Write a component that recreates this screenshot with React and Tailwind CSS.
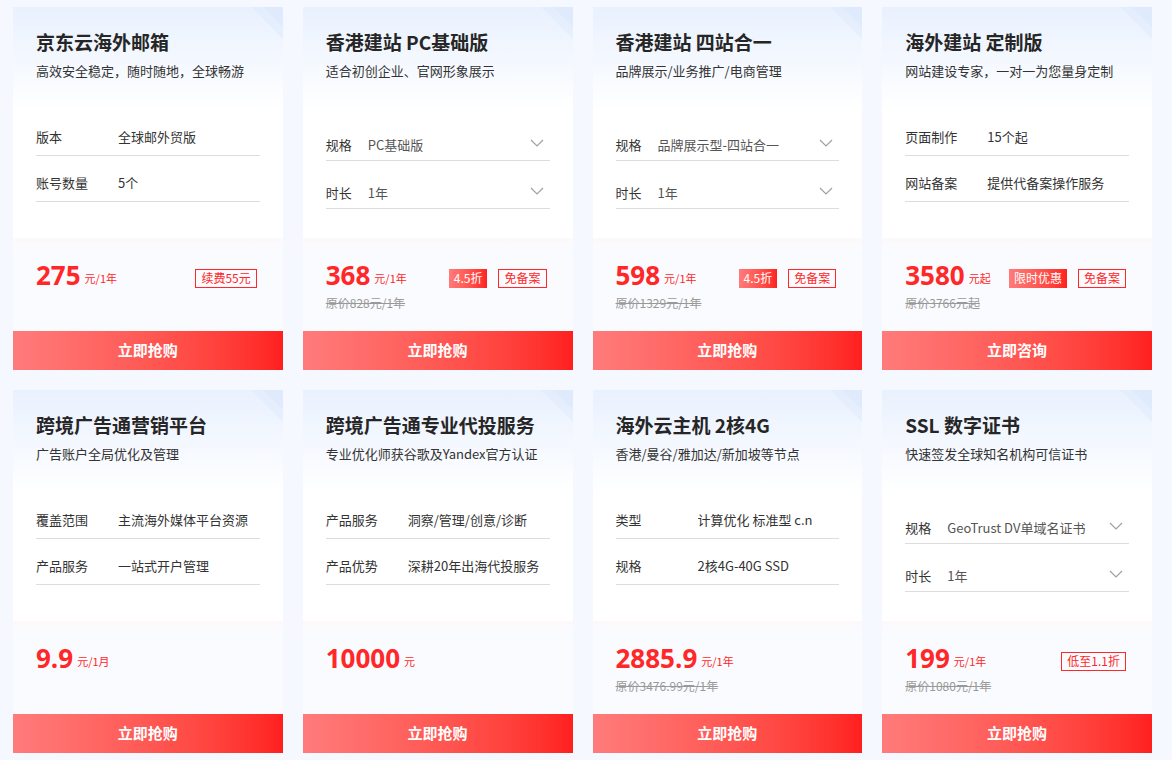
import React from 'react';

const products = [
  {
    title: '京东云海外邮箱',
    desc: '高效安全稳定，随时随地，全球畅游',
    type: 'text',
    rows: [['版本', '全球邮外贸版'], ['账号数量', '5个']],
    price: '275',
    unit: '元/1年',
    tags: [{ text: '续费55元', fill: false }],
    btn: '立即抢购',
  },
  {
    title: '香港建站 PC基础版',
    desc: '适合初创企业、官网形象展示',
    type: 'select',
    rows: [['规格', 'PC基础版'], ['时长', '1年']],
    price: '368',
    unit: '元/1年',
    tags: [{ text: '4.5折', fill: true }, { text: '免备案', fill: false }],
    origin: '原价828元/1年',
    btn: '立即抢购',
  },
  {
    title: '香港建站 四站合一',
    desc: '品牌展示/业务推广/电商管理',
    type: 'select',
    rows: [['规格', '品牌展示型-四站合一'], ['时长', '1年']],
    price: '598',
    unit: '元/1年',
    tags: [{ text: '4.5折', fill: true }, { text: '免备案', fill: false }],
    origin: '原价1329元/1年',
    btn: '立即抢购',
  },
  {
    title: '海外建站 定制版',
    desc: '网站建设专家，一对一为您量身定制',
    type: 'text',
    rows: [['页面制作', '15个起'], ['网站备案', '提供代备案操作服务']],
    price: '3580',
    unit: '元起',
    tags: [{ text: '限时优惠', fill: true }, { text: '免备案', fill: false }],
    origin: '原价3766元起',
    btn: '立即咨询',
  },
  {
    title: '跨境广告通营销平台',
    desc: '广告账户全局优化及管理',
    type: 'text',
    rows: [['覆盖范围', '主流海外媒体平台资源'], ['产品服务', '一站式开户管理']],
    price: '9.9',
    unit: '元/1月',
    tags: [],
    btn: '立即抢购',
  },
  {
    title: '跨境广告通专业代投服务',
    desc: '专业优化师获谷歌及Yandex官方认证',
    type: 'text',
    rows: [['产品服务', '洞察/管理/创意/诊断'], ['产品优势', '深耕20年出海代投服务']],
    price: '10000',
    unit: '元',
    tags: [],
    btn: '立即抢购',
  },
  {
    title: '海外云主机 2核4G',
    desc: '香港/曼谷/雅加达/新加坡等节点',
    type: 'text',
    rows: [['类型', '计算优化 标准型 c.n'], ['规格', '2核4G-40G SSD']],
    price: '2885.9',
    unit: '元/1年',
    tags: [],
    origin: '原价3476.99元/1年',
    btn: '立即抢购',
  },
  {
    title: 'SSL 数字证书',
    desc: '快速签发全球知名机构可信证书',
    type: 'select',
    rows: [['规格', 'GeoTrust DV单域名证书'], ['时长', '1年']],
    price: '199',
    unit: '元/1年',
    tags: [{ text: '低至1.1折', fill: false }],
    origin: '原价1080元/1年',
    btn: '立即抢购',
  },
];

const Chevron = () => (
  <svg width="14" height="8" viewBox="0 0 14 8" fill="none" className="shrink-0">
    <path d="M1 1l6 6 6-6" stroke="#a0a0a0" strokeWidth="1.2" />
  </svg>
);

const Card = ({ p }) => (
  <div className="flex flex-col h-[363px] bg-white">
    {/* top */}
    <div className="relative h-[231px] px-[23px] pt-[23px] bg-linear-to-b from-[#e9f1fe] to-white to-[45%] overflow-hidden">
      <svg className="absolute top-0 right-0" width="46" height="46" viewBox="0 0 46 46">
        <polygon points="14,0 46,0 46,32" fill="#dce8fd" opacity="0.45" />
        <polygon points="26,0 46,0 46,20" fill="#d6e4fd" opacity="0.35" />
      </svg>
      <h3 className="relative text-[19px] leading-[24px] font-bold text-[#262626]">{p.title}</h3>
      <p className="relative mt-[8px] text-[13px] leading-[18px] text-[#333]">{p.desc}</p>

      {p.type === 'text' ? (
        <div className="mt-[38px]">
          {p.rows.map(([k, v], i) => (
            <div key={k} className={`flex items-center h-[38px] border-b border-[#ddd] text-[13px] text-[#333] ${i > 0 ? 'mt-[8px]' : ''}`}>
              <span className="w-[82px] shrink-0">{k}</span>
              <span className="truncate">{v}</span>
            </div>
          ))}
        </div>
      ) : (
        <div className="mt-[49px]">
          {p.rows.map(([k, v], i) => (
            <div key={k} className={`flex items-center h-[32px] border-b border-[#ddd] text-[13px] ${i > 0 ? 'mt-[16px]' : ''}`}>
              <span className="w-[42px] shrink-0 text-[#333]">{k}</span>
              <span className="flex-1 truncate text-[#555]">{v}</span>
              <span className="mr-[6px] -mt-[3px]"><Chevron /></span>
            </div>
          ))}
        </div>
      )}
    </div>

    {/* price */}
    <div className="h-[93px] pl-[23px] pr-[26px] pt-[22px] bg-linear-to-b from-[#fef8f9] to-[#fafbff] to-[10%]">
      <div className="flex items-center h-[30px]">
        <span className="font-['Open_Sans','Noto_Sans_CJK_SC',sans-serif] text-[26px] leading-[30px] font-bold text-[#ff2727]">
          {p.price}
        </span>
        <span className="ml-[4px] mt-[6px] text-[11px] text-[#ff2727]">{p.unit}</span>
        {p.tags.length > 0 && (
          <div className="ml-auto flex gap-[11px] mt-[6px]">
            {p.tags.map((t) =>
              t.fill ? (
                <span key={t.text} className="h-[19px] px-[5px] flex items-center text-[12px] text-white bg-linear-to-r from-[#ff7a7a] to-[#ff1f1f]">
                  {t.text}
                </span>
              ) : (
                <span key={t.text} className="h-[19px] px-[5px] flex items-center text-[12px] text-[#ff2727] border border-[#ff2727]">
                  {t.text}
                </span>
              )
            )}
          </div>
        )}
      </div>
      {p.origin && (
        <div className="mt-[5px] text-[12px] leading-[16px] text-[#999] line-through">{p.origin}</div>
      )}
    </div>

    {/* button */}
    <button className="h-[39px] w-full bg-linear-to-r from-[#ff7b7b] to-[#ff1f1f] text-white text-[15px] font-bold">
      {p.btn}
    </button>
  </div>
);

export default function App() {
  return (
    <div className="min-h-[760px] bg-[#f5f8fe] pt-[7px] pl-[13px] pr-[20px] font-['Noto_Sans_CJK_SC','Noto_Sans',sans-serif]">
      <div className="grid grid-cols-4 gap-x-[20px] gap-y-[20px]">
        {products.map((p) => (
          <Card key={p.title} p={p} />
        ))}
      </div>
    </div>
  );
}
